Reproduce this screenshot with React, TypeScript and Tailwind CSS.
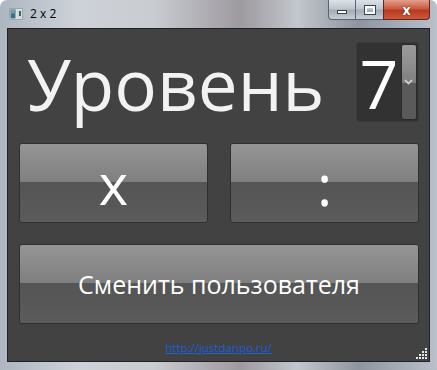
import React from "react";

function TitleIcon() {
  return (
    <svg width="14" height="12" viewBox="0 0 14 12" className="block">
      <rect x="0.5" y="0.5" width="13" height="11" fill="#e8ecef" stroke="#9aa4ad" />
      <rect x="1.5" y="1.5" width="5" height="9" fill="#3f6f86" />
      <rect x="1.5" y="1.5" width="5" height="4" fill="#6da2a0" />
      <rect x="7.5" y="1.5" width="5" height="9" fill="#cfd8de" />
      <rect x="10" y="3" width="2" height="5" fill="#2d6f4a" />
    </svg>
  );
}

function GlassButton({ children, className = "" }: { children: React.ReactNode; className?: string }) {
  return (
    <div
      className={
        "relative h-[80px] rounded-[3px] border border-[#2f2f2f] overflow-hidden flex items-center justify-center " +
        className
      }
    >
      <div className="absolute inset-0 flex flex-col">
        <div className="h-[38px] bg-[linear-gradient(180deg,#959595_0%,#8a8a8a_50%,#7f7f7f_100%)]" />
        <div className="flex-1 bg-[linear-gradient(180deg,#555555_0%,#585858_60%,#5c5c5c_100%)]" />
      </div>
      <div className="relative">{children}</div>
    </div>
  );
}

export default function App() {
  const font = "font-['Open_Sans','Noto_Sans',sans-serif]";
  return (
    <div className={"w-[437px] h-[370px] relative overflow-hidden rounded-t-[7px] bg-[linear-gradient(90deg,#aeb6c1_0%,#cdd2d8_18%,#c9ccd1_35%,#9e9aa0_55%,#c2c7cd_68%,#8f959e_82%,#b9c0c9_100%)] " + font}>
      {/* title bar */}
      <div className="h-[28px] flex items-start">
        <div className="flex items-center h-[28px] pl-[9px] gap-[7px]">
          <TitleIcon />
          <span className="text-[12px] text-black font-['Open_Sans',sans-serif] leading-none mb-[1px]">2 x 2</span>
        </div>
        <div className="ml-auto mr-[7px] flex h-[20px]">
          <div className="w-[27px] h-full rounded-bl-[4px] border border-[#5a6470] border-r-0 border-t-0 bg-[linear-gradient(180deg,#dde2e8_0%,#bfc6cf_45%,#a3acb7_55%,#c7ced6_100%)] flex items-center justify-center">
            <div className="w-[10px] h-[4px] bg-white border border-[#3a424c] mt-[4px]" />
          </div>
          <div className="w-[28px] h-full border-b border-l border-[#5a6470] bg-[linear-gradient(180deg,#dde2e8_0%,#bfc6cf_45%,#a3acb7_55%,#c7ced6_100%)] flex items-center justify-center">
            <div className="w-[10px] h-[8px] border-[2px] border-white outline outline-1 outline-[#3a424c]" />
          </div>
          <div className="w-[47px] h-full rounded-br-[4px] border-b border-l border-r border-[#5a2a20] bg-[linear-gradient(180deg,#e3a08f_0%,#cc5a40_45%,#b73a1f_55%,#d0573a_100%)] flex items-center justify-center">
            <span className="text-white font-bold text-[14px] leading-none [text-shadow:0_0_1px_#3a1a10,0_0_1px_#3a1a10]">x</span>
          </div>
        </div>
      </div>

      {/* client area */}
      <div className="mx-[7px] h-[334px] border border-[#1e2228] bg-[#424242] relative">
        <div className="pt-[13px] pl-[11px] pr-[10px] grid grid-cols-2 gap-x-[22px] gap-y-[21px]">
          {/* row 1 */}
          <div className="col-span-2 h-[80px] flex items-center justify-between">
            <span className="text-[71px] leading-none text-[#f2f2f2] pl-[8px] mt-[3px]">Уровень</span>
            <div className="w-[63px] h-[80px] rounded-[3px] bg-[#323232] border border-[#3a3a3a] flex">
              <div className="flex-1 flex items-center justify-center">
                <span className="text-[68px] leading-none text-white mt-[2px]">7</span>
              </div>
              <div className="w-[16px] my-[1px] mr-[1px] rounded-[3px] overflow-hidden flex flex-col border border-[#2a2a2a]">
                <div className="h-[38px] bg-[linear-gradient(180deg,#9a9a9a_0%,#8c8c8c_60%,#7e7e7e_100%)]" />
                <div className="flex-1 bg-[#5a5a5a]" />
              </div>
            </div>
          </div>
          {/* row 2 */}
          <GlassButton>
            <span className="text-[56px] leading-none text-white block -mt-[1px]">х</span>
          </GlassButton>
          <GlassButton>
            <span className="text-[56px] leading-none text-white block mt-[1px]">:</span>
          </GlassButton>
          {/* row 3 */}
          <GlassButton className="col-span-2">
            <span className="text-[25px] leading-none text-white block">Сменить пользователя</span>
          </GlassButton>
        </div>
        <div className="flex justify-center mt-[18px]">
          <a href="#" className="text-[11.5px] leading-none text-[#1c5fd6] underline">http://justdanpo.ru/</a>
        </div>
        {/* chevron on dropdown */}
        <svg className="absolute left-[396px] top-[50px]" width="9" height="6" viewBox="0 0 9 6">
          <path d="M1 1 L4.5 4.5 L8 1" stroke="#d8d8d8" strokeWidth="1.6" fill="none" />
        </svg>
        {/* size grip */}
        <svg className="absolute right-[1px] bottom-[1px]" width="12" height="12" viewBox="0 0 12 12">
          {[
            [9, 0], [9, 3], [6, 3], [9, 6], [6, 6], [3, 6], [9, 9], [6, 9], [3, 9], [0, 9],
          ].map(([x, y], i) => (
            <rect key={i} x={x} y={y} width="2" height="2" fill="#e8e8e8" />
          ))}
        </svg>
      </div>
    </div>
  );
}
